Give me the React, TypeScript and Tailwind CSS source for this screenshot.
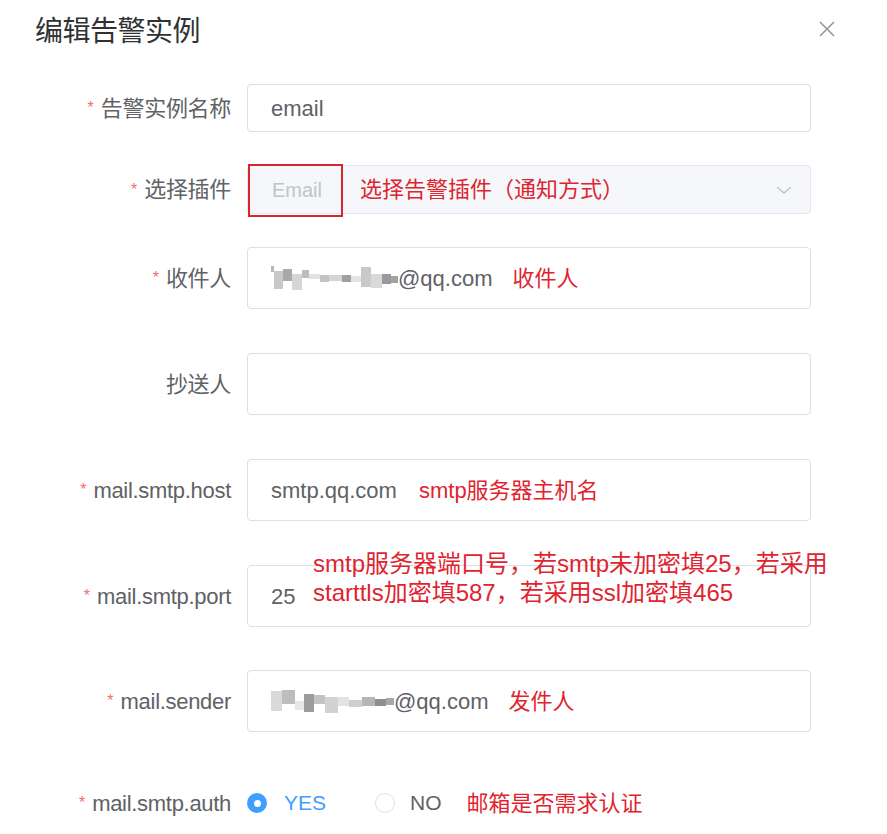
import type { ReactNode } from 'react';

type Block = { w: number; h: number; c: string; y?: number };

// pixelated (mosaic) part of an email address
const receiverMosaic: Block[] = [
  { w: 3, h: 6, c: '#b8b8b8', y: -9 },
  { w: 9, h: 18, c: '#c8c8c8', y: 2 },
  { w: 9, h: 12, c: '#a9a9a9', y: -3 },
  { w: 10, h: 16, c: '#d6d6d6', y: 4 },
  { w: 7, h: 8, c: '#bdbdbd', y: -4 },
  { w: 11, h: 5, c: '#e2e2e2', y: -2 },
  { w: 9, h: 7, c: '#c4c4c4', y: 0 },
  { w: 13, h: 6, c: '#d4d4d4', y: 0 },
  { w: 9, h: 7, c: '#9f9f9f', y: 0 },
  { w: 10, h: 6, c: '#e4e4e4', y: 1 },
  { w: 10, h: 20, c: '#c9c9c9', y: -1 },
  { w: 11, h: 14, c: '#d9d9d9', y: 3 },
  { w: 9, h: 10, c: '#9a9a9a', y: 1 },
  { w: 7, h: 7, c: '#a3a3a3', y: 1 },
];

const senderMosaic: Block[] = [
  { w: 11, h: 20, c: '#d9d9d9', y: 0 },
  { w: 13, h: 14, c: '#bdbdbd', y: -4 },
  { w: 9, h: 9, c: '#e6e6e6', y: 4 },
  { w: 10, h: 18, c: '#9c9c9c', y: 2 },
  { w: 11, h: 9, c: '#c3c3c3', y: -2 },
  { w: 13, h: 16, c: '#d2d2d2', y: 4 },
  { w: 11, h: 9, c: '#e3e3e3', y: 0 },
  { w: 13, h: 7, c: '#cfcfcf', y: 2 },
  { w: 13, h: 9, c: '#b5b5b5', y: 0 },
  { w: 11, h: 7, c: '#8f8f8f', y: 1 },
  { w: 8, h: 7, c: '#a8a8a8', y: 0 },
];

function Mosaic({ blocks }: { blocks: Block[] }) {
  return (
    <span className="flex items-center">
      {blocks.map((b, i) => (
        <span
          key={i}
          className="block"
          style={{ width: b.w, height: b.h, background: b.c, transform: `translateY(${b.y ?? 0}px)` }}
        />
      ))}
    </span>
  );
}

function Row({
  label,
  required,
  className,
  children,
}: {
  label: string;
  required?: boolean;
  className: string;
  children: ReactNode;
}) {
  return (
    <div className={`flex items-center ${className}`}>
      <div className="flex w-[247px] shrink-0 items-center justify-end pr-[16px] text-[22px] text-[#606266]">
        {required && <span className="mr-[7px] text-[16px] text-[#f56c6c]">*</span>}
        <span className="whitespace-nowrap tracking-[-0.3px]">{label}</span>
      </div>
      {children}
    </div>
  );
}

function Input({ h, children }: { h: string; children?: ReactNode }) {
  return (
    <div
      className={`relative flex w-[564px] items-center rounded-[4px] border border-[#dcdfe6] bg-white pl-[23px] text-[22px] text-[#606266] ${h}`}
    >
      {children}
    </div>
  );
}

export default function App() {
  return (
    <div className="h-[834px] w-[887px] overflow-hidden bg-white font-['Liberation_Sans','Noto_Sans_CJK_SC',sans-serif]">
      <header className="flex h-[64px] items-center justify-between pl-[35px] pr-[51px]">
        <h1 className="text-[28px] font-normal tracking-[-0.5px] text-[#303133]">编辑告警实例</h1>
        <svg width="18" height="18" viewBox="0 0 18 18" className="-mt-[6px]">
          <path d="M2 2 L16 16 M16 2 L2 16" stroke="#909399" strokeWidth="1.5" fill="none" />
        </svg>
      </header>

      <Row label="告警实例名称" required className="mt-[20px]">
        <Input h="h-[48px]">email</Input>
      </Row>

      <Row label="选择插件" required className="mt-[33px]">
        <div className="relative flex h-[49px] w-[564px] items-center rounded-[4px] border border-[#e4e7ed] bg-[#f5f7fa] pl-[24px] text-[20px]">
          <span className="text-[#c0c4cc]">Email</span>
          <span className="ml-[38px] text-[22px] text-[#e0242f]">选择告警插件（通知方式）</span>
          <svg width="20" height="10" viewBox="0 0 20 10" className="ml-auto mr-[16px]">
            <path d="M3 2 L10 8 L17 2" stroke="#c0c4cc" strokeWidth="1.5" fill="none" />
          </svg>
          <div className="absolute left-[0px] top-[-2px] h-[53px] w-[95px] border-2 border-[#d9232d]" />
        </div>
      </Row>

      <Row label="收件人" required className="mt-[33px]">
        <Input h="h-[62px]">
          <Mosaic blocks={receiverMosaic} />
          <span>@qq.com</span>
          <span className="ml-[20px] text-[22px] text-[#e0242f]">收件人</span>
        </Input>
      </Row>

      <Row label="抄送人" className="mt-[44px]">
        <Input h="h-[62px]" />
      </Row>

      <Row label="mail.smtp.host" required className="mt-[44px]">
        <Input h="h-[62px]">
          <span>smtp.qq.com</span>
          <span className="ml-[22px] text-[22px] text-[#e0242f]">smtp服务器主机名</span>
        </Input>
      </Row>

      <Row label="mail.smtp.port" required className="mt-[44px]">
        <Input h="h-[62px]">
          <span>25</span>
          <div className="absolute left-[65px] top-[-17px] whitespace-nowrap text-[24px] leading-[29px] text-[#e0242f]">
            <div>smtp服务器端口号，若smtp未加密填25，若采用</div>
            <div>starttls加密填587，若采用ssl加密填465</div>
          </div>
        </Input>
      </Row>

      <Row label="mail.sender" required className="mt-[43px]">
        <Input h="h-[62px]">
          <Mosaic blocks={senderMosaic} />
          <span>@qq.com</span>
          <span className="ml-[20px] text-[22px] text-[#e0242f]">发件人</span>
        </Input>
      </Row>

      <Row label="mail.smtp.auth" required className="mt-[51px] h-[40px]">
        <div className="flex items-center text-[21px]">
          <span className="flex h-[20px] w-[20px] items-center justify-center rounded-full bg-[#409eff]">
            <span className="h-[7px] w-[7px] rounded-full bg-white" />
          </span>
          <span className="ml-[17px] text-[#409eff]">YES</span>
          <span className="ml-[49px] h-[20px] w-[20px] rounded-full border border-[#dcdfe6] bg-white" />
          <span className="ml-[15px] text-[#606266]">NO</span>
          <span className="ml-[25px] text-[22px] text-[#e0242f]">邮箱是否需求认证</span>
        </div>
      </Row>
    </div>
  );
}
